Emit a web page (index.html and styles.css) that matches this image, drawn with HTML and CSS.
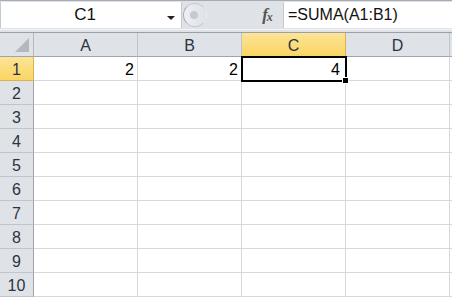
FILE: index.html
```html
<!DOCTYPE html>
<html lang="es">
<head>
    <meta charset="UTF-8">
    <title>Hoja1</title>
    <link rel="stylesheet" href="styles.css">
</head>
<body>
    <div class="barra-formula">
        <div class="cuadro-nombre">
            <span class="nombre">C1</span>
            <span class="flecha"></span>
        </div>
        <div class="separador">
            <span class="boton-redondo"><span class="punto"></span></span>
        </div>
        <div class="fx"><i>f</i><i class="x">x</i></div>
        <div class="entrada">=SUMA(A1:B1)</div>
    </div>

    <div class="hoja">
        <div class="esquina"><span class="triangulo"></span></div>
        <div class="col-head">A</div>
        <div class="col-head">B</div>
        <div class="col-head activa">C</div>
        <div class="col-head">D</div>
        <div class="col-head resto"></div>

        <!-- fila 1 -->
        <div class="row-head activa">1</div>
        <div class="celda">2</div>
        <div class="celda">2</div>
        <div class="celda seleccionada">4</div>
        <div class="celda"></div>
        <div class="celda resto"></div>
    </div>
    <script>
        // filas vacías 2 a 10
        const hoja = document.querySelector('.hoja');
        for (let i = 2; i <= 10; i++) {
            let html = `<div class="row-head">${i}</div>`;
            html += '<div class="celda"></div><div class="celda"></div><div class="celda"></div><div class="celda"></div><div class="celda resto"></div>';
            hoja.insertAdjacentHTML('beforeend', html);
        }
    </script>
</body>
</html>
```

FILE: styles.css
```css
body {
    margin: 0;
    font-family: "Liberation Sans", Arial, sans-serif;
    background-color: #ffffff;
    width: 452px;
    height: 298px;
    overflow: hidden;
}

/* Barra de fórmulas */
.barra-formula {
    display: flex;
    height: 33px;
    box-sizing: border-box;
    background-color: #dfe3e8;
    border-top: 1px solid #a5abb3;
    border-bottom: 1px solid #9aa0a8;
    padding-bottom: 4px;
    position: relative;
}

.barra-formula::after {
    content: "";
    position: absolute;
    left: 0;
    right: 0;
    bottom: 2px;
    height: 1px;
    background-color: #f3f4f6;
}

.cuadro-nombre {
    width: 182px;
    box-sizing: border-box;
    background-color: #ffffff;
    border-left: 1px solid #c5cad0;
    border-right: 1px solid #c5cad0;
    display: flex;
    align-items: center;
    position: relative;
    margin-top: 1px;
}

.nombre {
    width: 168px;
    text-align: center;
    font-size: 17px;
    color: #111;
}

.flecha {
    position: absolute;
    left: 166px;
    top: 14px;
    width: 0;
    height: 0;
    border-left: 4px solid transparent;
    border-right: 4px solid transparent;
    border-top: 4px solid #222;
}

.separador {
    width: 62px;
    display: flex;
    align-items: center;
}

.boton-redondo {
    width: 24px;
    height: 24px;
    box-sizing: border-box;
    margin-left: 1px;
    border-radius: 50%;
    border: 1px solid #c4c9cf;
    border-left-color: #aab0b8;
    border-right-color: transparent;
    background: linear-gradient(90deg, #eef0f3 0%, #e4e7eb 60%, #dfe3e8 100%);
    display: flex;
    align-items: center;
    padding-left: 6px;
}

.punto {
    width: 8px;
    height: 8px;
    border-radius: 50%;
    background-color: #c6cad0;
}

.fx {
    width: 39px;
    display: flex;
    align-items: center;
    justify-content: center;
    font-family: "Liberation Serif", serif;
    font-size: 17px;
    color: #555;
    padding-left: 8px;
    box-sizing: border-box;
}

.fx i {
    font-weight: bold;
}

.fx .x {
    font-size: 12px;
    margin-left: -1px;
    margin-top: 5px;
}

.entrada {
    flex: 1;
    background-color: #ffffff;
    border-left: 1px solid #c5cad0;
    margin-top: 1px;
    display: flex;
    align-items: center;
    padding-left: 4px;
    font-size: 16px;
    color: #111;
}

/* Hoja */
.hoja {
    display: grid;
    grid-template-columns: 34px repeat(4, 104px) 1fr;
    grid-template-rows: 24px;
    grid-auto-rows: 24px;
}

.esquina,
.col-head,
.row-head {
    background-color: #dfe3e8;
    color: #2b3342;
    font-size: 16px;
    box-sizing: border-box;
    display: flex;
    align-items: center;
    justify-content: center;
}

.esquina {
    border-right: 1px solid #b5b9bf;
    border-bottom: 1px solid #9ea4ac;
    position: relative;
}

.triangulo {
    position: absolute;
    right: 4px;
    bottom: 4px;
    width: 0;
    height: 0;
    border-left: 14px solid transparent;
    border-bottom: 14px solid #b3b8be;
}

.col-head {
    border-right: 1px solid #c0c5cb;
    border-bottom: 1px solid #9ea4ac;
    padding-top: 2px;
}

.col-head.resto {
    border-right: none;
}

.row-head {
    border-right: 1px solid #9ea4ac;
    border-bottom: 1px solid #c0c5cb;
    padding-top: 2px;
}

.activa {
    background: linear-gradient(#fde497, #f9d563);
    border-right-color: #e2b04c;
    border-bottom-color: #e2b04c;
}

.celda {
    border-right: 1px solid #d8d8d8;
    border-bottom: 1px solid #d8d8d8;
    box-sizing: border-box;
    font-size: 16px;
    color: #000;
    display: flex;
    align-items: center;
    justify-content: flex-end;
    padding-right: 3px;
    padding-top: 2px;
}

.celda.resto {
    border-right: none;
}

.seleccionada {
    position: relative;
    outline: 2px solid #000;
    outline-offset: -1px;
    z-index: 1;
    padding-right: 5px;
}

.seleccionada::after {
    content: "";
    position: absolute;
    right: -4px;
    bottom: -4px;
    width: 5px;
    height: 5px;
    background-color: #000;
    border: 1px solid #fff;
}
```
